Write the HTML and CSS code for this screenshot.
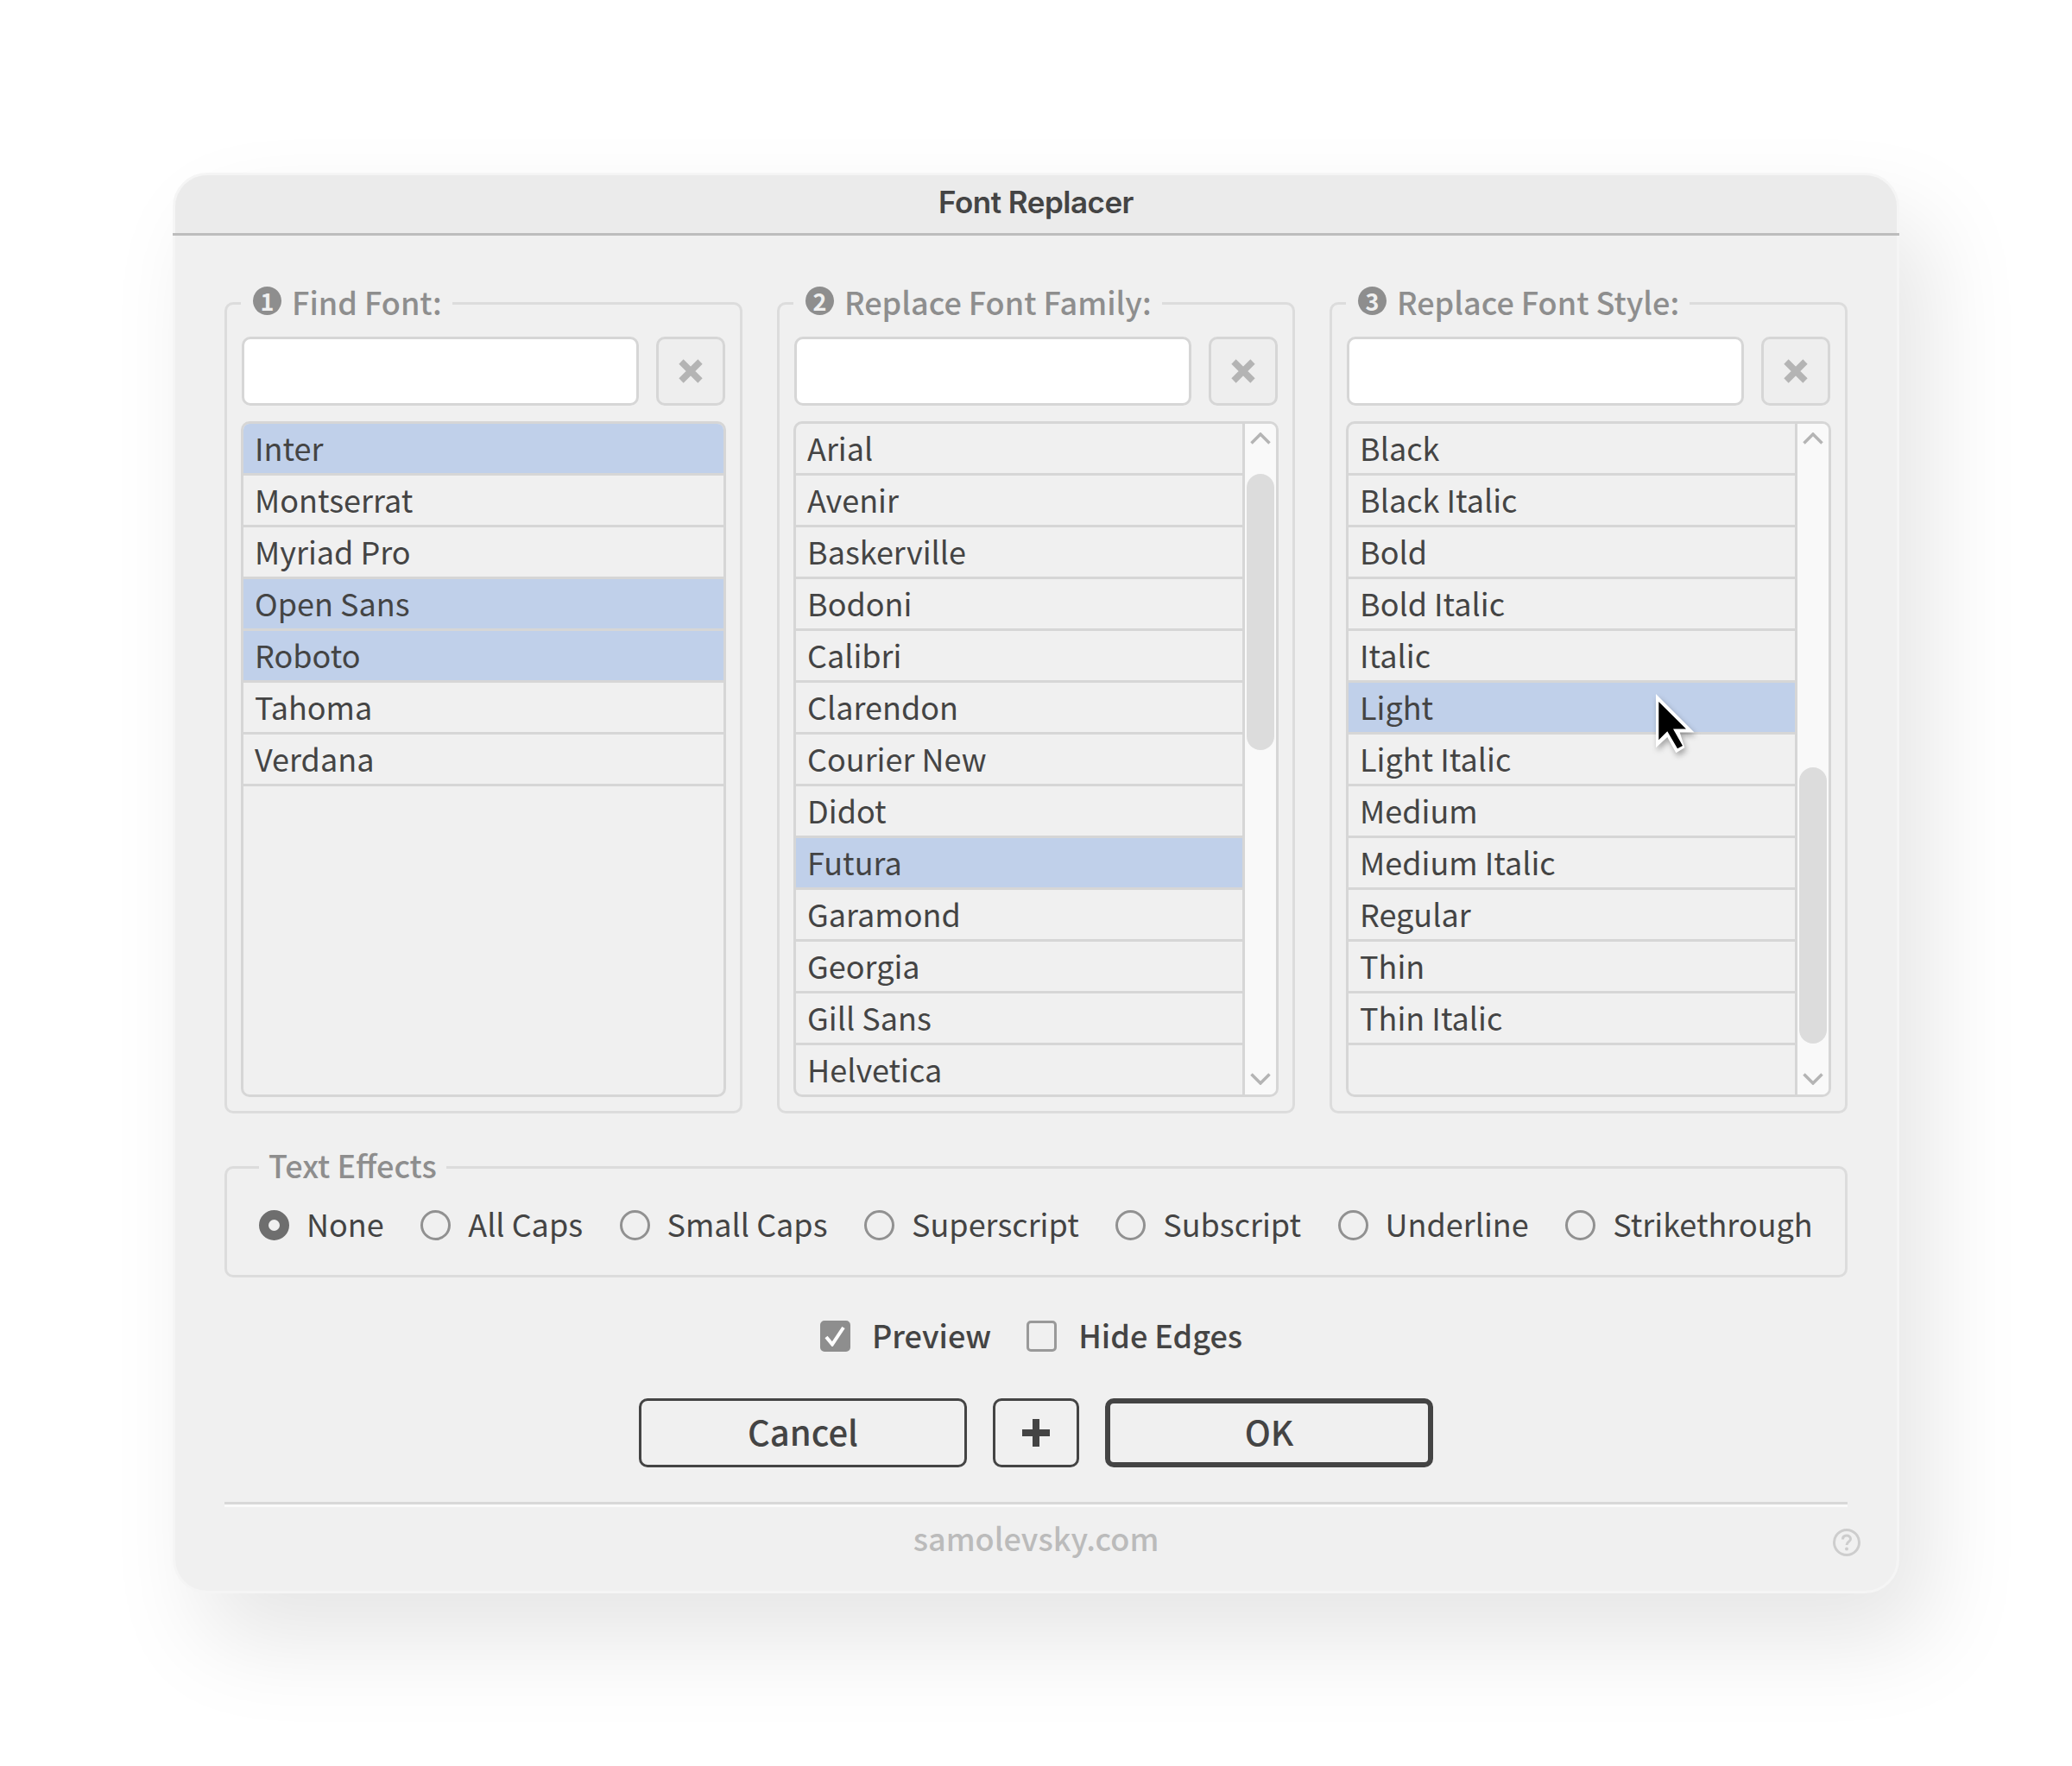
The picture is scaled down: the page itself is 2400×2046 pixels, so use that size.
FILE: index.html
```html
<!DOCTYPE html>
<html lang="en">
<head>
<meta charset="utf-8">
<title>Font Replacer</title>
<link rel="stylesheet" href="styles.css">
</head>
<body>
<main class="dialog">
  <header class="titlebar">Font Replacer</header>
  <div class="content">
    <div class="columns">
      <fieldset class="group">
        <legend class="legend"><span class="num">1</span>Find Font:</legend>
        <div class="search"><div class="input"></div><button class="clear"><svg viewBox="0 0 28 28" width="28" height="28"><path d="M3 3 25 25M25 3 3 25" stroke="#b4b4b4" stroke-width="7.5" fill="none"/></svg></button></div>
        <div class="list">
          <ul class="rows">
            <li class="row sel">Inter</li><li class="row">Montserrat</li><li class="row">Myriad Pro</li><li class="row sel">Open Sans</li><li class="row sel">Roboto</li><li class="row">Tahoma</li><li class="row">Verdana</li>
          </ul>
        </div>
      </fieldset>
      <fieldset class="group">
        <legend class="legend"><span class="num">2</span>Replace Font Family:</legend>
        <div class="search"><div class="input"></div><button class="clear"><svg viewBox="0 0 28 28" width="28" height="28"><path d="M3 3 25 25M25 3 3 25" stroke="#b4b4b4" stroke-width="7.5" fill="none"/></svg></button></div>
        <div class="list">
          <ul class="rows">
            <li class="row">Arial</li><li class="row">Avenir</li><li class="row">Baskerville</li><li class="row">Bodoni</li><li class="row">Calibri</li><li class="row">Clarendon</li><li class="row">Courier New</li><li class="row">Didot</li><li class="row sel">Futura</li><li class="row">Garamond</li><li class="row">Georgia</li><li class="row">Gill Sans</li><li class="row">Helvetica</li>
          </ul>
          <div class="scrollbar">
            <svg class="arrow" viewBox="0 0 24 14" width="24" height="14"><path d="M1.5 12.5 12 2 22.5 12.5" stroke="#b4b4b4" stroke-width="3.5" fill="none"/></svg>
            <div class="track"><div class="thumb thumb-top"></div></div>
            <svg class="arrow" viewBox="0 0 24 14" width="24" height="14"><path d="M1.5 1.5 12 12 22.5 1.5" stroke="#b4b4b4" stroke-width="3.5" fill="none"/></svg>
          </div>
        </div>
      </fieldset>
      <fieldset class="group">
        <legend class="legend"><span class="num">3</span>Replace Font Style:</legend>
        <div class="search"><div class="input"></div><button class="clear"><svg viewBox="0 0 28 28" width="28" height="28"><path d="M3 3 25 25M25 3 3 25" stroke="#b4b4b4" stroke-width="7.5" fill="none"/></svg></button></div>
        <div class="list">
          <ul class="rows">
            <li class="row">Black</li><li class="row">Black Italic</li><li class="row">Bold</li><li class="row">Bold Italic</li><li class="row">Italic</li><li class="row sel">Light</li><li class="row">Light Italic</li><li class="row">Medium</li><li class="row">Medium Italic</li><li class="row">Regular</li><li class="row">Thin</li><li class="row">Thin Italic</li>
          </ul>
          <div class="scrollbar">
            <svg class="arrow" viewBox="0 0 24 14" width="24" height="14"><path d="M1.5 12.5 12 2 22.5 12.5" stroke="#b4b4b4" stroke-width="3.5" fill="none"/></svg>
            <div class="track"><div class="thumb thumb-bottom"></div></div>
            <svg class="arrow" viewBox="0 0 24 14" width="24" height="14"><path d="M1.5 1.5 12 12 22.5 1.5" stroke="#b4b4b4" stroke-width="3.5" fill="none"/></svg>
          </div>
          <svg class="cursor" viewBox="0 0 46 70" width="46" height="70"><path d="M0 0 44.5 44.5H27.7L33.3 62.3 23.3 68.3 13.3 50 0 62.3Z" fill="#fff"/><path d="M3.3 9 35 40.5H20L31 60 25 63.3 13.3 43.3 3.3 53.3Z" fill="#000"/></svg>
        </div>
      </fieldset>
    </div>

    <fieldset class="effects">
      <legend class="legend-plain">Text Effects</legend>
      <div class="radios">
        <label class="radio"><span class="dot on"></span>None</label>
        <label class="radio"><span class="dot"></span>All Caps</label>
        <label class="radio"><span class="dot"></span>Small Caps</label>
        <label class="radio"><span class="dot"></span>Superscript</label>
        <label class="radio"><span class="dot"></span>Subscript</label>
        <label class="radio"><span class="dot"></span>Underline</label>
        <label class="radio"><span class="dot"></span>Strikethrough</label>
      </div>
    </fieldset>

    <div class="checks">
      <label class="check"><span class="box on"><svg viewBox="0 0 24 24" width="24" height="24"><path d="M2 13 9 21.5 22 2" stroke="#fff" stroke-width="4" fill="none"/></svg></span>Preview</label>
      <label class="check"><span class="box"></span>Hide Edges</label>
    </div>

    <div class="buttons">
      <button class="btn wide">Cancel</button>
      <button class="btn plus"><svg viewBox="0 0 32 32" width="32" height="32"><path d="M16 0V32M0 16H32" stroke="#444" stroke-width="8" fill="none"/></svg></button>
      <button class="btn wide primary">OK</button>
    </div>

    <footer class="footer">
      <span class="site">samolevsky.com</span>
      <svg class="help" viewBox="0 0 32 32" width="32" height="32"><circle cx="16" cy="16" r="14.5" fill="none" stroke="#cdcdcd" stroke-width="3"/><path d="M11.5 12.5C11.5 9.5 13.5 8 16 8S20.5 9.5 20.5 12C20.5 15 16 15.5 16 19" fill="none" stroke="#cdcdcd" stroke-width="3"/><circle cx="16" cy="23.5" r="2" fill="#cdcdcd"/></svg>
    </footer>
  </div>
</main>
</body>
</html>
```
FILE: styles.css
```css
* { box-sizing: border-box; }
html, body { margin: 0; background: #fff; }
body {
  height: 2046px;
  padding-top: 200px;
  overflow: hidden;
  font-family: "Noto Sans CJK SC", "Noto Sans", sans-serif;
  color: #444;
}
.dialog {
  width: 2000px;
  height: 1646px;
  margin: 0 auto;
  background: #f0f0f0;
  border: 3px solid #f5f5f5;
  border-radius: 40px;
  box-shadow: 35px 55px 110px rgba(0,0,0,.1);
}
.titlebar {
  position: relative;
  height: 70px;
  background: #ebebeb;
  border-radius: 37px 37px 0 0;
  text-align: center;
  font: 600 35px/62px Inter, sans-serif;
  letter-spacing: -.5px;
  color: #444;
}
.titlebar::after {
  content: "";
  position: absolute;
  left: -3px;
  right: -3px;
  bottom: 0;
  height: 3px;
  background: #bdbdbd;
}
.content { padding: 58px 57px 0; }
.columns { display: flex; gap: 40px; }
.group {
  width: 600px;
  height: 959px;
  margin: 0;
  padding: 0 17px;
  border: 3px solid #dcdcdc;
  border-radius: 10px;
  min-width: 0;
}
.legend, .legend-plain {
  display: flex;
  align-items: center;
  height: 40px;
  font-size: 36px;
  line-height: 40px;
  font-weight: 500;
  color: #8e8e8e;
  padding: 0 12px 5px;
}
.legend { margin-left: -1px; padding-left: 14px; }
.num {
  width: 33px;
  height: 33px;
  border-radius: 50%;
  background: #8e8e8e;
  color: #f0f0f0;
  font-size: 27px;
  line-height: 33px;
  font-weight: 700;
  text-align: center;
  margin-right: 12px;
}
.search { display: flex; gap: 20px; margin-top: 19px; height: 80px; }
.input {
  flex: 1;
  background: #fff;
  border: 3px solid #d6d6d6;
  border-radius: 10px;
}
.clear {
  width: 80px;
  padding: 0;
  background: #eee;
  border: 3px solid #d6d6d6;
  border-radius: 10px;
  display: flex;
  align-items: center;
  justify-content: center;
}
.list {
  position: relative;
  display: flex;
  height: 783px;
  margin: 18px -1px 0;
  border: 3px solid #d6d6d6;
  border-radius: 10px;
  overflow: hidden;
}
.rows { flex: 1; margin: 0; padding: 0; list-style: none; min-width: 0; }
.row {
  height: 60px;
  padding-left: 13px;
  border-bottom: 3px solid #d6d6d6;
  font-size: 36px;
  line-height: 55px;
  color: #444;
}
.sel { background: #c0d0ea; }
.scrollbar {
  width: 39px;
  flex: none;
  display: flex;
  flex-direction: column;
  align-items: center;
  background: #f9f9f9;
  border-left: 3px solid #d6d6d6;
  padding: 10px 0 11px;
}
.arrow { flex: none; }
.track { flex: 1; width: 100%; position: relative; }
.thumb {
  position: absolute;
  left: 2px;
  right: 2px;
  height: 320px;
  background: #dcdcdc;
  border-radius: 16px;
}
.thumb-top { top: 34px; }
.thumb-bottom { top: 374px; }
.cursor {
  position: absolute;
  left: 356px;
  top: 313px;
  filter: drop-shadow(2px 4px 3px rgba(0,0,0,.3));
}

.effects {
  height: 148px;
  margin: 42px 0 0;
  padding: 0 0 0 37px;
  border: 3px solid #dcdcdc;
  border-radius: 10px;
}
.legend-plain { padding: 0 11px 7px; }
.radios { display: flex; gap: 42.5px; margin-top: 19px; }
.radio {
  display: flex;
  align-items: center;
  gap: 20px;
  height: 56px;
  padding-bottom: 4px;
  font-size: 36px;
  white-space: nowrap;
  color: #444;
}
.dot {
  width: 35px;
  height: 35px;
  margin-top: 4px;
  border: 3px solid #919191;
  border-radius: 50%;
  background: #f0f0f0;
}
.dot.on { border: 11px solid #6e6e6e; }

.checks { display: flex; justify-content: center; gap: 41px; margin-top: 40px; padding-right: 11px; }
.check {
  display: flex;
  align-items: center;
  gap: 25px;
  height: 56px;
  padding-bottom: 4px;
  font-size: 36px;
  font-weight: 500;
  color: #444;
}
.box {
  width: 35px;
  height: 36px;
  margin-top: 4px;
  border: 3px solid #999;
  border-radius: 5px;
  background: #f0f0f0;
  display: flex;
  align-items: center;
  justify-content: center;
}
.box.on { background: #8e8e8e; border-color: #8e8e8e; }

.buttons { display: flex; justify-content: center; gap: 30px; margin-top: 44px; }
.btn {
  height: 80px;
  padding: 0 0 5px;
  background: #f0f0f0;
  border: 3px solid #444;
  border-radius: 10px;
  font-family: inherit;
  font-size: 40px;
  font-weight: 500;
  color: #444;
  display: flex;
  align-items: center;
  justify-content: center;
}
.wide { width: 380px; }
.plus { width: 100px; padding: 0; }
.primary { border-width: 6px; }

.footer {
  position: relative;
  margin-top: 40px;
  border-top: 3px solid #d8d8d8;
  box-shadow: inset 0 3px 0 #fafafa;
  height: 100px;
  text-align: center;
}
.site {
  display: block;
  padding-top: 15px;
  font-size: 36px;
  line-height: 46px;
  font-weight: 500;
  color: #bbb;
}
.help { position: absolute; right: -15px; top: 28px; }
```
